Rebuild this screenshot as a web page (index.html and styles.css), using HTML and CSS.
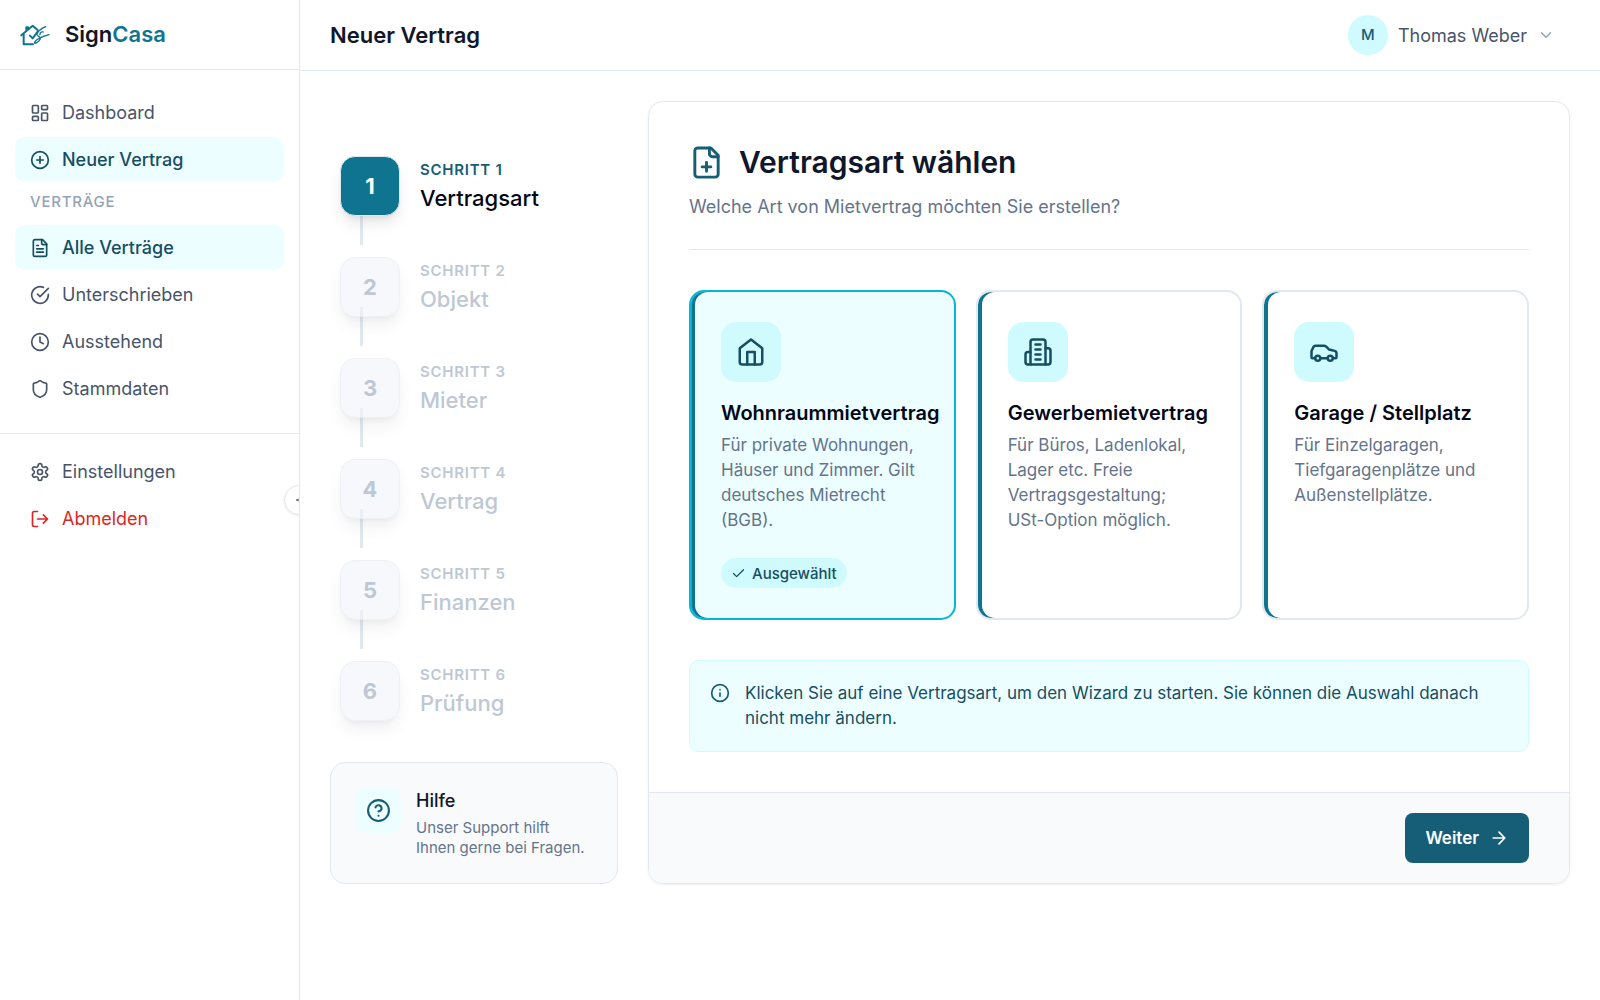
FILE: index.html
```html
<!DOCTYPE html>
<html lang="de">
<head>
	<meta charset="UTF-8">
	<meta name="viewport" content="width=device-width, initial-scale=1">
	<title>SignCasa - Neuer Vertrag</title>
	<link rel="stylesheet" href="styles.css">
</head>
<body>

<div class="app">
	<aside class="sidebar">
		<a class="brand" href="#">
			<svg class="logo" viewBox="0 0 90 66" fill="none" stroke="currentColor" stroke-linecap="round" stroke-linejoin="round">
				<path stroke-width="6" d="M4 34L38 5l14 12M19 19V10h5v5M11 30v31h28M30 35l8 8 16-22"/>
				<path stroke-width="4" d="M77 8C62 14 48 26 51 33c3 5 12 4 10 11-3 9-20 19-17 11 4-9 24-18 43-23M70 24c-5-2-11 2-10 8"/>
			</svg>
			<span class="brand-name">Sign<span>Casa</span></span>
		</a>

		<nav class="nav">
			<a href="#"><svg class="icon" viewBox="0 0 24 24"><rect x="3" y="3" width="7" height="9" rx="1"/><rect x="14" y="3" width="7" height="5" rx="1"/><rect x="14" y="12" width="7" height="9" rx="1"/><rect x="3" y="16" width="7" height="5" rx="1"/></svg>Dashboard</a>
			<a href="#" class="active"><svg class="icon" viewBox="0 0 24 24"><circle cx="12" cy="12" r="10"/><path d="M8 12h8M12 8v8"/></svg>Neuer Vertrag</a>
			<h2 class="nav-label">Verträge</h2>
			<a href="#" class="active"><svg class="icon" viewBox="0 0 24 24"><path d="M15 2H6a2 2 0 0 0-2 2v16a2 2 0 0 0 2 2h12a2 2 0 0 0 2-2V7Z"/><path d="M14 2v4a2 2 0 0 0 2 2h4M10 9H8M16 13H8M16 17H8"/></svg>Alle Verträge</a>
			<a href="#"><svg class="icon" viewBox="0 0 24 24"><path d="M22 11.08V12a10 10 0 1 1-5.93-9.14"/><path d="m22 4-10 10.01-3-3"/></svg>Unterschrieben</a>
			<a href="#"><svg class="icon" viewBox="0 0 24 24"><circle cx="12" cy="12" r="10"/><path d="M12 6v6l4 2"/></svg>Ausstehend</a>
			<a href="#"><svg class="icon" viewBox="0 0 24 24"><path d="M20 13c0 5-3.5 7.5-7.66 8.95a1 1 0 0 1-.67-.01C7.5 20.5 4 18 4 13V6a1 1 0 0 1 1-1c2 0 4.5-1.2 6.24-2.72a1.17 1.17 0 0 1 1.52 0C14.51 3.81 17 5 19 5a1 1 0 0 1 1 1z"/></svg>Stammdaten</a>
		</nav>

		<nav class="nav nav-bottom">
			<a href="#"><svg class="icon" viewBox="0 0 24 24"><path d="M12.22 2h-.44a2 2 0 0 0-2 2v.18a2 2 0 0 1-1 1.73l-.43.25a2 2 0 0 1-2 0l-.15-.08a2 2 0 0 0-2.73.73l-.22.38a2 2 0 0 0 .73 2.73l.15.1a2 2 0 0 1 1 1.72v.51a2 2 0 0 1-1 1.74l-.15.09a2 2 0 0 0-.73 2.73l.22.38a2 2 0 0 0 2.73.73l.15-.08a2 2 0 0 1 2 0l.43.25a2 2 0 0 1 1 1.73V20a2 2 0 0 0 2 2h.44a2 2 0 0 0 2-2v-.18a2 2 0 0 1 1-1.73l.43-.25a2 2 0 0 1 2 0l.15.08a2 2 0 0 0 2.73-.73l.22-.39a2 2 0 0 0-.73-2.73l-.15-.08a2 2 0 0 1-1-1.74v-.5a2 2 0 0 1 1-1.74l.15-.09a2 2 0 0 0 .73-2.73l-.22-.38a2 2 0 0 0-2.73-.73l-.15.08a2 2 0 0 1-2 0l-.43-.25a2 2 0 0 1-1-1.73V4a2 2 0 0 0-2-2z"/><circle cx="12" cy="12" r="3"/></svg>Einstellungen</a>
			<a href="#" class="logout"><svg class="icon" viewBox="0 0 24 24"><path d="M9 21H5a2 2 0 0 1-2-2V5a2 2 0 0 1 2-2h4M16 17l5-5-5-5M21 12H9"/></svg>Abmelden</a>
		</nav>

		<button class="collapse" type="button" aria-label="Menü einklappen">
			<svg viewBox="0 0 10 10"><path d="M8 3L2 5l6 2"/></svg>
		</button>
	</aside>

	<div class="page">
		<header class="topbar">
			<h1>Neuer Vertrag</h1>
			<button class="user" type="button">
				<span class="avatar">M</span>
				<span>Thomas Weber</span>
				<svg class="chevron" viewBox="0 0 24 24"><path d="m6 9 6 6 6-6"/></svg>
			</button>
		</header>

		<main class="content">
			<div class="side">
				<ol class="steps">
					<li class="current"><button type="button"><span class="num">1</span><span class="step-text"><small>Schritt 1</small><b>Vertragsart</b></span></button></li>
					<li><button type="button" disabled><span class="num">2</span><span class="step-text"><small>Schritt 2</small><b>Objekt</b></span></button></li>
					<li><button type="button" disabled><span class="num">3</span><span class="step-text"><small>Schritt 3</small><b>Mieter</b></span></button></li>
					<li><button type="button" disabled><span class="num">4</span><span class="step-text"><small>Schritt 4</small><b>Vertrag</b></span></button></li>
					<li><button type="button" disabled><span class="num">5</span><span class="step-text"><small>Schritt 5</small><b>Finanzen</b></span></button></li>
					<li><button type="button" disabled><span class="num">6</span><span class="step-text"><small>Schritt 6</small><b>Prüfung</b></span></button></li>
				</ol>

				<section class="help">
					<div class="help-icon"><svg class="icon" viewBox="0 0 24 24"><circle cx="12" cy="12" r="10"/><path d="M9.09 9a3 3 0 0 1 5.83 1c0 2-3 3-3 3M12 17h.01"/></svg></div>
					<div>
						<h3>Hilfe</h3>
						<p>Unser Support hilft<br>Ihnen gerne bei Fragen.</p>
					</div>
				</section>
			</div>

			<section class="card">
				<div class="card-body">
					<div class="card-head">
						<h2><svg class="icon" viewBox="0 0 24 24"><path d="M15 2H6a2 2 0 0 0-2 2v16a2 2 0 0 0 2 2h12a2 2 0 0 0 2-2V7Z"/><path d="M14 2v4a2 2 0 0 0 2 2h4M9 15h6M12 18v-6"/></svg>Vertragsart wählen</h2>
						<p>Welche Art von Mietvertrag möchten Sie erstellen?</p>
					</div>

					<div class="types">
						<button class="type selected" type="button" aria-pressed="true">
							<span class="type-icon"><svg class="icon" viewBox="0 0 24 24"><path d="m3 9 9-7 9 7v11a2 2 0 0 1-2 2H5a2 2 0 0 1-2-2z"/><path d="M9 22V12h6v10"/></svg></span>
							<span class="type-name">Wohnraummietvertrag</span>
							<span class="type-desc">Für private Wohnungen, Häuser und Zimmer. Gilt deutsches Mietrecht (BGB).</span>
							<span class="pill"><svg viewBox="0 0 24 24"><path d="M20 6 9 17l-5-5"/></svg>Ausgewählt</span>
						</button>
						<button class="type" type="button" aria-pressed="false">
							<span class="type-icon"><svg class="icon" viewBox="0 0 24 24"><path d="M6 22V4a2 2 0 0 1 2-2h8a2 2 0 0 1 2 2v18Z"/><path d="M6 12H4a2 2 0 0 0-2 2v6a2 2 0 0 0 2 2h2M18 9h2a2 2 0 0 1 2 2v9a2 2 0 0 1-2 2h-2M10 6h4M10 10h4M10 14h4M10 18h4"/></svg></span>
							<span class="type-name">Gewerbemietvertrag</span>
							<span class="type-desc">Für Büros, Ladenlokal, Lager etc. Freie Vertragsgestaltung; <span class="nowrap">USt-Option</span> möglich.</span>
						</button>
						<button class="type" type="button" aria-pressed="false">
							<span class="type-icon"><svg class="icon" viewBox="0 0 24 24"><path d="M19 17h2c.6 0 1-.4 1-1v-3c0-.9-.7-1.7-1.5-1.9C18.7 10.6 16 10 16 10s-1.3-1.4-2.2-2.3c-.5-.4-1.1-.7-1.8-.7H5c-.6 0-1.1.4-1.4.9l-1.4 2.9A3.7 3.7 0 0 0 2 12v4c0 .6.4 1 1 1h2M9 17h6"/><circle cx="7" cy="17" r="2"/><circle cx="17" cy="17" r="2"/></svg></span>
							<span class="type-name">Garage / Stellplatz</span>
							<span class="type-desc">Für Einzelgaragen, Tiefgaragenplätze und Außenstellplätze.</span>
						</button>
					</div>

					<div class="info">
						<svg class="icon" viewBox="0 0 24 24"><circle cx="12" cy="12" r="10"/><path d="M12 16v-4M12 8h.01"/></svg>
						<p>Klicken Sie auf eine Vertragsart, um den Wizard zu starten. Sie können die Auswahl danach nicht mehr ändern.</p>
					</div>
				</div>

				<footer class="card-foot">
					<button class="next" type="button">Weiter<svg class="icon" viewBox="0 0 24 24"><path d="M5 12h14M12 5l7 7-7 7"/></svg></button>
				</footer>
			</section>
		</main>
	</div>
</div>

</body>
</html>
```
FILE: styles.css
```css
*{box-sizing: border-box;}
body,h1,h2,h3,p,ol{margin: 0;padding: 0;}
body{font-family: Inter, "Liberation Sans", sans-serif;font-size: 18px;line-height: 25px;color: #0f172a;background: #fff;}
a{color: inherit;text-decoration: none;}
button{font: inherit;color: inherit;background: none;border: 0;padding: 0;cursor: pointer;text-align: left;}
svg{display: block;flex-shrink: 0;fill: none;stroke: currentColor;stroke-linecap: round;stroke-linejoin: round;}
.icon{width: 20px;height: 20px;stroke-width: 2;}
.nowrap{white-space: nowrap;}

.app{display: flex;min-height: 100vh;}

/* sidebar */
.sidebar{position: relative;flex: 0 0 300px;border-right: 1px solid #e2e8f0;overflow: hidden;}
.brand{display: flex;align-items: center;gap: 15px;height: 70px;padding: 0 20px;border-bottom: 1px solid #e2e8f0;}
.logo{width: 30px;height: 22px;color: #0e7490;}
.brand-name{font-size: 22px;font-weight: 600;}
.brand-name span{color: #0e7490;}
.nav{display: flex;flex-direction: column;gap: 2px;padding: 20px 15px 22px;color: #475569;}
.nav a{display: flex;align-items: center;gap: 12px;height: 45px;padding: 0 15px;border-radius: 10px;}
.nav .active{background: #ecfeff;color: #164e63;font-weight: 500;}
.nav .logout{color: #dc2626;}
.nav-label{padding: 5px 15px 9px;font-size: 15px;font-weight: 500;letter-spacing: .05em;text-transform: uppercase;color: #94a3b8;}
.nav-bottom{border-top: 1px solid #e2e8f0;padding: 15px;}
.collapse{position: absolute;top: 485px;right: -15px;width: 30px;height: 30px;display: flex;align-items: center;justify-content: center;background: #fff;border: 1px solid #e2e8f0;border-radius: 50%;color: #64748b;box-shadow: 0 1px 3px rgba(0,0,0,.08);}
.collapse svg{width: 10px;height: 10px;}

/* top bar */
.page{flex: 1;min-width: 0;}
.topbar{display: flex;align-items: center;justify-content: space-between;height: 71px;padding: 0 45px 0 30px;border-bottom: 1px solid #e2e8f0;}
.topbar h1{font-size: 22px;font-weight: 600;}
.user{display: flex;align-items: center;gap: 10px;color: #475569;}
.avatar{width: 40px;height: 40px;line-height: 40px;border-radius: 50%;background: #cffafe;color: #155e75;font-size: 15px;font-weight: 500;text-align: center;}
.chevron{width: 18px;height: 18px;stroke-width: 2;color: #94a3b8;}

.content{display: grid;grid-template-columns: 288px minmax(0, 1fr);gap: 30px;padding: 30px;}

/* steps */
.side{display: flex;flex-direction: column;gap: 30px;padding-top: 45px;}
.steps{list-style: none;display: flex;flex-direction: column;gap: 21px;}
.steps li{position: relative;}
.steps li:not(:last-child)::before{content: "";position: absolute;left: 30px;top: 60px;width: 3px;height: 39px;background: #e2e8f0;}
.steps button{position: relative;display: flex;align-items: center;gap: 20px;width: 100%;padding: 10px;opacity: .6;color: #94a3b8;}
.num{width: 60px;height: 60px;line-height: 58px;border: 1px solid #e2e8f0;border-radius: 15px;background: #f1f5f9;font-size: 22px;font-weight: 700;text-align: center;box-shadow: 0 10px 15px -3px rgba(0,0,0,.1), 0 4px 6px -4px rgba(0,0,0,.1);}
.step-text{display: flex;flex-direction: column;gap: 3px;}
.steps small{font-size: 15px;line-height: 20px;font-weight: 600;letter-spacing: .05em;text-transform: uppercase;}
.steps b{font-size: 22px;line-height: 30px;font-weight: 500;}
.steps .current button{opacity: 1;color: #020617;}
.current .num{background: #0e7490;color: #fff;}
.current small{color: #155e75;}

.help{display: flex;gap: 15px;margin-top: auto;padding: 25px;border: 1px solid #e2e8f0;border-radius: 15px;background: #f8fafc;}
.help-icon{display: flex;align-items: center;justify-content: center;width: 45px;height: 45px;border-radius: 10px;background: #ecfeff;color: #155e75;}
.help-icon .icon{width: 25px;height: 25px;}
.help h3{font-size: 18px;font-weight: 500;margin-bottom: 5px;}
.help p{font-size: 15px;line-height: 20px;color: #64748b;}

/* card */
.card{border: 1px solid #e2e8f0;border-radius: 15px;overflow: hidden;box-shadow: 0 1px 3px rgba(0,0,0,.06);}
.card-body{padding: 40px;}
.card-head{padding-bottom: 30px;margin-bottom: 40px;border-bottom: 1px solid #e2e8f0;}
.card-head h2{display: flex;align-items: center;gap: 15px;font-size: 30px;line-height: 40px;font-weight: 600;margin-bottom: 12px;}
.card-head .icon{width: 35px;height: 35px;color: #155e75;}
.card-head p{color: #64748b;}
.types{display: grid;grid-template-columns: repeat(3, minmax(0, 1fr));gap: 20px;margin-bottom: 40px;}
.type{display: flex;flex-direction: column;align-items: flex-start;padding: 30px;border: 2px solid #e2e8f0;border-radius: 15px;box-shadow: inset 4px 0 0 #0e7490;}
.type-icon{display: flex;align-items: center;justify-content: center;width: 60px;height: 60px;margin-bottom: 19px;border-radius: 15px;background: #cffafe;color: #164e63;}
.type-icon .icon{width: 30px;height: 30px;}
.type-name{font-size: 20px;font-weight: 600;color: #020617;margin-bottom: 7px;}
.type-desc{font-size: 17px;color: #64748b;}
.selected{background: #ecfeff;border-color: #06b6d4;box-shadow: inset 1px 0 0 #06b6d4, inset 4px 0 0 #0e7490;}
.pill{display: flex;align-items: center;gap: 6px;height: 30px;margin-top: 25px;padding: 0 10px;border-radius: 15px;background: #cffafe;color: #164e63;font-size: 15px;font-weight: 500;}
.pill svg{width: 15px;height: 15px;stroke-width: 2;}

.info{display: flex;gap: 15px;padding: 20px;border: 1px solid #cffafe;border-radius: 10px;background: #ecfeff;color: #164e63;font-size: 17px;}
.info .icon{margin-top: 2px;color: #155e75;}
.card-foot{display: flex;justify-content: flex-end;padding: 20px 40px;border-top: 1px solid #e2e8f0;background: #f8fafc;}
.next{display: flex;align-items: center;gap: 10px;height: 50px;padding: 0 20px;border-radius: 8px;background: #155e75;color: #fff;font-size: 17px;font-weight: 600;}
```
